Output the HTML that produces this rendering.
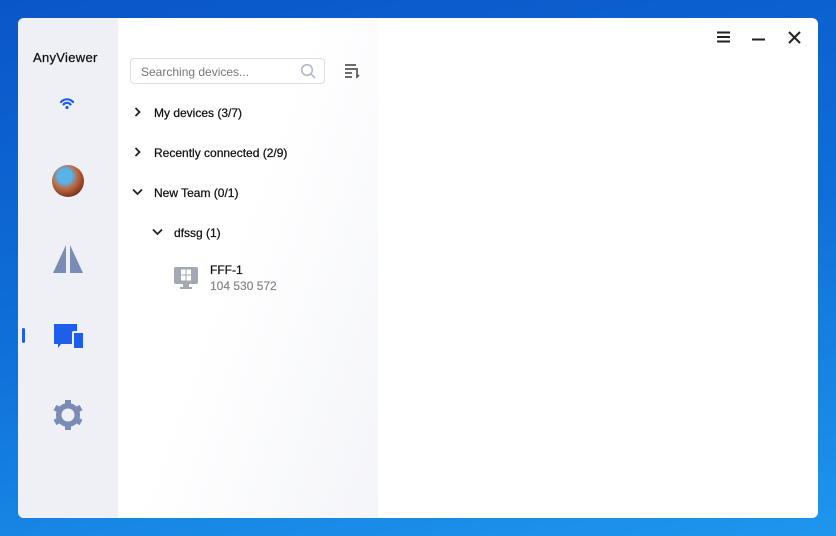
<!DOCTYPE html>
<html><head><style>
*{margin:0;padding:0;box-sizing:border-box}
body{width:836px;height:536px;overflow:hidden;background:linear-gradient(170deg,#0a56c8 0%,#0f6fd8 50%,#1e96ee 100%);font-family:"Liberation Sans","DejaVu Sans",sans-serif;position:relative}
.win{position:absolute;left:18px;top:18px;width:800px;height:500px;background:#fff;border-radius:6px;overflow:hidden}
.side{position:absolute;left:0;top:0;width:100px;height:500px;background:#eff0f6}
.mid{position:absolute;left:100px;top:0;width:260px;height:500px;background:linear-gradient(110deg,#fff 45%,#f4f5f9 100%)}
.t{position:absolute;font-size:12px;color:#111;white-space:nowrap;-webkit-text-stroke:0.25px #111}
</style></head><body>
<div class="win">
 <div class="side">
  <div class="t" style="left:15px;top:32px;font-size:13px;letter-spacing:.3px">AnyViewer</div>
  <svg style="position:absolute;left:41px;top:79px" width="16" height="14" viewBox="0 0 16 14"><path d="M2 5a8 8 0 0 1 12 0M4.5 7.5a4.5 4.5 0 0 1 7 0" stroke="#1e5eea" stroke-width="2.2" fill="none" stroke-linecap="round"/><circle cx="8" cy="10.5" r="1.6" fill="#1e5eea"/></svg>
  <div style="position:absolute;left:34px;top:147px;width:32px;height:32px;border-radius:50%;background:radial-gradient(circle at 40% 35%,#5ab3e8 0 25%,#c06840 45%,#7a3520 75%,#3a2a30 100%)"></div>
  <svg style="position:absolute;left:34px;top:226px" width="32" height="30" viewBox="0 0 32 30"><path d="M14 1L1 29h13zM18 1l13 28H18z" fill="#7a8bb5"/></svg>
  <div style="position:absolute;left:4px;top:310px;width:3px;height:15px;background:#1e5eea;border-radius:2px"></div>
  <svg style="position:absolute;left:35px;top:305px" width="32" height="26" viewBox="0 0 32 26"><path d="M1 1h23v20H8l-3 4v-4H1z" fill="#1e5eea"/><rect x="20" y="9" width="11" height="17" rx="1" fill="#1e5eea" stroke="#eff0f6" stroke-width="2"/></svg>
  <svg style="position:absolute;left:34px;top:381px" width="32" height="32" viewBox="0 0 32 32"><g fill="#7a8bb5"><circle cx="16" cy="16" r="12"/><g id="k"><rect x="13" y="1" width="6" height="8"/></g><use href="#k" transform="rotate(60 16 16)"/><use href="#k" transform="rotate(120 16 16)"/><use href="#k" transform="rotate(180 16 16)"/><use href="#k" transform="rotate(240 16 16)"/><use href="#k" transform="rotate(300 16 16)"/></g><circle cx="16" cy="16" r="6.5" fill="#eff0f6"/></svg>
 </div>
 <div class="mid">
  <div style="position:absolute;left:12px;top:40px;width:195px;height:26px;border:1px solid #dcdfe8;border-radius:4px;background:#fff"></div>
  <div class="t" style="left:23px;top:47px;color:#777;-webkit-text-stroke:0">Searching devices...</div>
  <svg style="position:absolute;left:182px;top:45px" width="16" height="16" viewBox="0 0 16 16"><circle cx="7" cy="7" r="5.3" stroke="#b5bac8" stroke-width="1.6" fill="none"/><path d="M11 11l4 4" stroke="#b5bac8" stroke-width="1.8"/></svg>
  <svg style="position:absolute;left:226px;top:45px" width="16" height="15" viewBox="0 0 16 15"><path d="M1 2h11M1 6h11M1 10h7M1 14h7M13 5v9l2-2" stroke="#555" stroke-width="1.7" fill="none"/></svg>
  <svg style="position:absolute;left:16px;top:89px" width="8" height="10"><path d="M1.5 1l4 4-4 4" stroke="#222" stroke-width="1.8" fill="none"/></svg>
  <div class="t" style="left:36px;top:88px">My devices (3/7)</div>
  <svg style="position:absolute;left:16px;top:129px" width="8" height="10"><path d="M1.5 1l4 4-4 4" stroke="#222" stroke-width="1.8" fill="none"/></svg>
  <div class="t" style="left:36px;top:128px">Recently connected (2/9)</div>
  <svg style="position:absolute;left:14px;top:170px" width="11" height="8"><path d="M1 1.5l4.5 4.5 4.5-4.5" stroke="#222" stroke-width="1.8" fill="none"/></svg>
  <div class="t" style="left:36px;top:168px">New Team (0/1)</div>
  <svg style="position:absolute;left:34px;top:210px" width="11" height="8"><path d="M1 1.5l4.5 4.5 4.5-4.5" stroke="#222" stroke-width="1.8" fill="none"/></svg>
  <div class="t" style="left:56px;top:208px">dfssg (1)</div>
  <svg style="position:absolute;left:56px;top:249px" width="24" height="23" viewBox="0 0 24 23"><rect x="0" y="0" width="24" height="17" rx="2" fill="#a3a8b2"/><path d="M9 17h6v3h3v2H6v-2h3z" fill="#a3a8b2"/><g fill="#fff"><rect x="7" y="2.5" width="4.5" height="5"/><rect x="12.5" y="2.5" width="4.5" height="5"/><rect x="7" y="8.5" width="4.5" height="5"/><rect x="12.5" y="8.5" width="4.5" height="5"/></g></svg>
  <div class="t" style="left:92px;top:245px">FFF-1</div>
  <div class="t" style="left:92px;top:261px;color:#888;-webkit-text-stroke:0.2px #888">104 530 572</div>
 </div>
 <svg style="position:absolute;left:699px;top:13px" width="13" height="12"><path d="M0 1.5h13M0 6h13M0 10.5h13" stroke="#222" stroke-width="2"/></svg>
 <svg style="position:absolute;left:734px;top:20px" width="13" height="3"><path d="M0 1.5h13" stroke="#222" stroke-width="2"/></svg>
 <svg style="position:absolute;left:770px;top:13px" width="13" height="13"><path d="M1 1l11 11M12 1L1 12" stroke="#222" stroke-width="2"/></svg>
</div>
</body></html>
